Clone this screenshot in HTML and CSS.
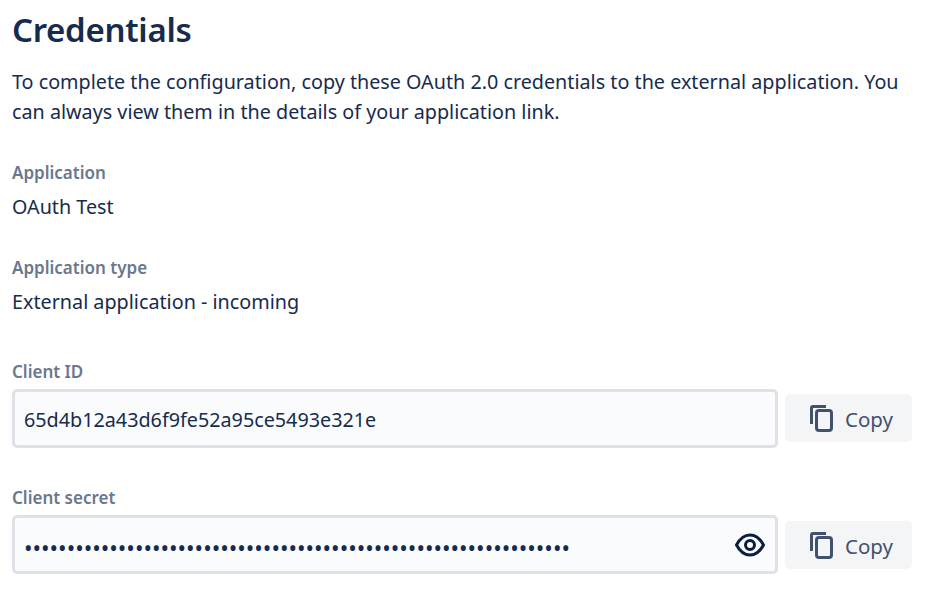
FILE: index.html
```html
<!DOCTYPE html>
<html lang="en">
<head>
<meta charset="UTF-8">
<title>Credentials</title>
<link rel="stylesheet" href="styles.css">
</head>
<body>
<div class="page">
    <h1 class="title">Credentials</h1>
    <p class="intro">To complete the configuration, copy these OAuth 2.0 credentials to the external application. You can always view them in the details of your application link.</p>
    <div class="detail">
        <div class="label">Application</div>
        <div class="value">OAuth Test</div>
    </div>
    <div class="detail">
        <div class="label">Application type</div>
        <div class="value">External application - incoming</div>
    </div>
    <div class="field">
        <div class="label">Client ID</div>
        <div class="field-row">
            <div class="input"><span class="input-text">65d4b12a43d6f9fe52a95ce5493e321e</span></div>
            <button class="copy">
                <svg width="26" height="28" viewBox="0 0 26 28" fill="none" stroke="#42526e" stroke-width="3"><path d="M2.500 20V4A1.500 1.500 0 0 1 4 2.500H17"/><rect x="7.500" y="6.500" width="15" height="20" rx="2.500"/></svg>
                <span class="copy-text">Copy</span>
            </button>
        </div>
    </div>
    <div class="field">
        <div class="label">Client secret</div>
        <div class="field-row">
            <div class="input">
                <span class="dots">••••••••••••••••••••••••••••••••••••••••••••••••••••••••••••••••</span>
                <svg width="30" height="30" viewBox="0 0 30 30" fill="none" stroke="#091e42" stroke-width="3"><path d="M1.500 15C5 8.500 9.500 5 15 5S25 8.500 28.500 15C25 21.500 20.500 25 15 25S5 21.500 1.500 15Z"/><circle cx="15" cy="15" r="4.500"/></svg>
            </div>
            <button class="copy">
                <svg width="26" height="28" viewBox="0 0 26 28" fill="none" stroke="#42526e" stroke-width="3"><path d="M2.500 20V4A1.500 1.500 0 0 1 4 2.500H17"/><rect x="7.500" y="6.500" width="15" height="20" rx="2.500"/></svg>
                <span class="copy-text">Copy</span>
            </button>
        </div>
    </div>
</div>
</body>
</html>
```

FILE: styles.css
```css
body, html {
    margin: 0;
    background: #fff;
    font-family: "Noto Sans", "Open Sans", sans-serif;
    color: #172b4d;
    overflow: hidden;
}
.page {
    padding: 10px 13px 0 12px;
}
.title {
    margin: 0;
    font-size: 33px;
    line-height: 40px;
    font-weight: 600;
    letter-spacing: -0.3px;
}
.intro {
    margin: 17px 0 0;
    font-size: 19.75px;
    line-height: 30px;
}
.detail {
    margin-top: 34px;
}
.detail + .detail {
    margin-top: 35px;
}
.label {
    font-size: 17px;
    line-height: 24px;
    font-weight: 600;
    color: #6b778c;
}
.value {
    margin-top: 8px;
    font-size: 19.75px;
    line-height: 28px;
}
.field {
    margin-top: 43.6px;
}
.field + .field {
    margin-top: 37.9px;
}
.field-row {
    display: flex;
    align-items: center;
    gap: 7px;
    margin-top: 5px;
}
.input {
    flex: 1;
    box-sizing: border-box;
    height: 59.5px;
    display: flex;
    align-items: center;
    justify-content: space-between;
    padding: 0 10px 0 9px;
    background: #fafbfc;
    border: 3px solid #dfe1e6;
    border-radius: 5px;
    font-size: 19.75px;
}
.input-text {
    padding-top: 2px;
}
.dots {
    padding-top: 8px;
    font-size: 22.7px;
}
.copy {
    display: flex;
    align-items: center;
    gap: 10px;
    width: 127px;
    height: 48px;
    padding: 0 0 0 24px;
    border: 0;
    border-radius: 5px;
    background: #f4f5f7;
    color: #42526e;
    font: inherit;
    font-size: 20.5px;
}
.copy-text {
    padding-top: 2px;
}
```
